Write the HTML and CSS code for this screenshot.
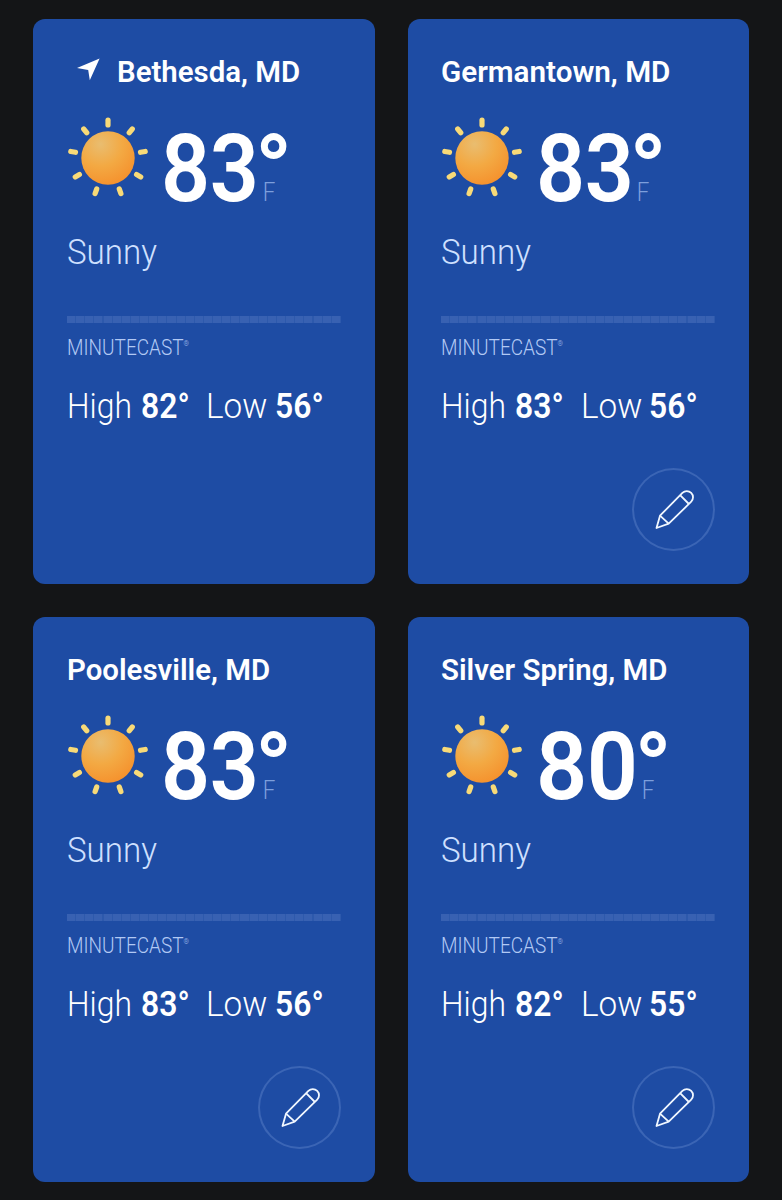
FILE: index.html
```html
<!DOCTYPE html>
<html lang="en">
<head>
<meta charset="utf-8">
<title>Locations</title>
<link rel="stylesheet" href="styles.css">
</head>
<body>
<svg class="defs" width="0" height="0">
  <defs>
    <radialGradient id="sunFill" cx="0.36" cy="0.24" r="0.82">
      <stop offset="0" stop-color="#e9bd70"/>
      <stop offset="0.5" stop-color="#f3a943"/>
      <stop offset="1" stop-color="#f5902c"/>
    </radialGradient>
    <symbol id="sun" viewBox="0 0 82 82">
      <g stroke="#f8da78" stroke-width="5.2" stroke-linecap="round">
        <path d="M41 8V3.2"/>
        <path d="M41 8V3.2" transform="rotate(40 41 41)"/>
        <path d="M41 8V3.2" transform="rotate(80 41 41)"/>
        <path d="M41 8V3.2" transform="rotate(120 41 41)"/>
        <path d="M41 8V3.2" transform="rotate(160 41 41)"/>
        <path d="M41 8V3.2" transform="rotate(200 41 41)"/>
        <path d="M41 8V3.2" transform="rotate(240 41 41)"/>
        <path d="M41 8V3.2" transform="rotate(280 41 41)"/>
        <path d="M41 8V3.2" transform="rotate(320 41 41)"/>
      </g>
      <circle cx="41" cy="41" r="26.7" fill="url(#sunFill)"/>
    </symbol>
    <symbol id="pencil" viewBox="0 0 83 83">
      <g fill="none" stroke="#f0f7ff" stroke-width="1.8" stroke-linejoin="round">
        <path d="M24.5 60L28 47.7L50.4 24.9A6.2 6.2 0 0 1 59.2 33.7L36.7 55.7Z"/>
        <path d="M28 47.7L36.7 55.7M48.1 27.2L56.9 36"/>
      </g>
    </symbol>
  </defs>
</svg>
<main class="grid">
  <article class="card">
    <h2 class="name"><svg class="arrow" width="24" height="24" viewBox="0 0 24 24"><path d="M0 10L22.6 0.4L12.8 22.3L11.2 11.9Z" fill="#fff"/></svg><span class="fit">Bethesda, MD</span></h2>
    <div class="now"><svg class="sun"><use href="#sun"/></svg><span class="temp"><span class="fit">83</span></span><span class="unit"><b>°</b><i>F</i></span></div>
    <p class="sky"><span class="fit">Sunny</span></p>
    <div class="minutes"></div>
    <p class="cast"><span class="fit">MINUTECAST<sup>®</sup></span></p>
    <p class="range"><span class="fit">High</span><b class="fit">82°</b><span class="fit low">Low</span><b class="fit">56°</b></p>
  </article>
  <article class="card">
    <h2 class="name"><span class="fit long">Germantown, MD</span></h2>
    <div class="now"><svg class="sun"><use href="#sun"/></svg><span class="temp"><span class="fit">83</span></span><span class="unit"><b>°</b><i>F</i></span></div>
    <p class="sky"><span class="fit">Sunny</span></p>
    <div class="minutes"></div>
    <p class="cast"><span class="fit">MINUTECAST<sup>®</sup></span></p>
    <p class="range"><span class="fit">High</span><b class="fit">83°</b><span class="fit low">Low</span><b class="fit">56°</b></p>
    <button class="edit" aria-label="Edit"><svg width="83" height="83"><use href="#pencil"/></svg></button>
  </article>
  <article class="card">
    <h2 class="name"><span class="fit">Poolesville, MD</span></h2>
    <div class="now"><svg class="sun"><use href="#sun"/></svg><span class="temp"><span class="fit">83</span></span><span class="unit"><b>°</b><i>F</i></span></div>
    <p class="sky"><span class="fit">Sunny</span></p>
    <div class="minutes"></div>
    <p class="cast"><span class="fit">MINUTECAST<sup>®</sup></span></p>
    <p class="range"><span class="fit">High</span><b class="fit">83°</b><span class="fit low">Low</span><b class="fit">56°</b></p>
    <button class="edit" aria-label="Edit"><svg width="83" height="83"><use href="#pencil"/></svg></button>
  </article>
  <article class="card">
    <h2 class="name"><span class="fit">Silver Spring, MD</span></h2>
    <div class="now"><svg class="sun"><use href="#sun"/></svg><span class="temp wide"><span class="fit">80</span></span><span class="unit"><b>°</b><i>F</i></span></div>
    <p class="sky"><span class="fit">Sunny</span></p>
    <div class="minutes"></div>
    <p class="cast"><span class="fit">MINUTECAST<sup>®</sup></span></p>
    <p class="range"><span class="fit">High</span><b class="fit">82°</b><span class="fit low">Low</span><b class="fit">55°</b></p>
    <button class="edit" aria-label="Edit"><svg width="83" height="83"><use href="#pencil"/></svg></button>
  </article>
</main>
</body>
</html>
```
FILE: styles.css
```css
* { box-sizing: border-box; margin: 0; padding: 0; }
body { background: #141517; font-family: Roboto, "Liberation Sans", sans-serif; color: #fff; }
.defs { display: block; }
.grid {
  display: grid;
  grid-template-columns: 341.5px 341px;
  grid-template-rows: 565px 565px;
  gap: 33px;
  padding: 19.4px 33.3px 17px;
}
.card {
  display: flex;
  flex-direction: column;
  padding: 35px 33.7px 0;
  border-radius: 12px;
  background: #1e4ca4;
}
.fit { display: inline-block; transform-origin: 0 50%; white-space: nowrap; }
.name { display: flex; height: 36px; font-size: 30px; line-height: 36px; font-weight: 600; }
.name .fit { transform: scaleX(0.98); }
.name .long { transform: scaleX(0.988); }
.arrow { margin: 4px 16px 0 10px; flex: none; }
.now { display: flex; height: 90px; margin-top: 27px; }
.sun { width: 82px; height: 82px; margin: -0.2px -0.5px 0 0; flex: none; }
.temp {
  width: 106.5px;
  padding-left: 13px;
  margin-top: 5px;
  font-size: 94px;
  line-height: 94px;
  font-weight: 650;
  letter-spacing: -0.5px;
}
.temp .fit { transform: scaleX(0.915); }
.temp.wide { width: 111.5px; }
.temp.wide .fit { transform: scaleX(0.955); }
.unit { display: flex; flex-direction: column; margin-top: 5px; }
.unit b { height: 46px; font-size: 95px; line-height: 95px; font-weight: 800; }
.unit i {
  font-style: normal;
  font-size: 26px;
  line-height: 30px;
  font-weight: 300;
  color: #7d9fdc;
  padding: 8.6px 0 0 9px;
  transform: scaleX(0.86);
  transform-origin: 0 50%;
}
.sky { height: 40px; margin-top: 25.6px; font-size: 35px; line-height: 40px; font-weight: 320; color: #cfe0ff; }
.sky .fit { transform: scaleX(0.945); }
.minutes {
  height: 7px;
  margin-top: 43px;
  background: repeating-linear-gradient(90deg, #3861b2 0 8.1px, #2d59ac 8.1px 9.13px);
}
.cast { height: 24px; margin-top: 12px; font-size: 22.5px; line-height: 24px; font-weight: 350; color: #b2c9f4; }
.cast .fit { transform: scaleX(0.845); }
.cast sup { font-size: 8px; line-height: 0; vertical-align: 9.5px; }
.range {
  display: grid;
  grid-template-columns: 74px 65.5px 68.5px 64px;
  height: 40px;
  margin-top: 27.6px;
  font-size: 35px;
  line-height: 40px;
  font-weight: 340;
}
.range .fit { transform: scaleX(0.91); }
.range .low { transform: scaleX(0.95); }
.range b { font-weight: 600; }
.edit {
  align-self: flex-end;
  width: 83px;
  height: 83px;
  margin-top: 41.4px;
  border: 0;
  border-radius: 50%;
  background: none;
  box-shadow: inset 0 0 0 2px #3b65b5;
}
.edit svg { display: block; }
```
